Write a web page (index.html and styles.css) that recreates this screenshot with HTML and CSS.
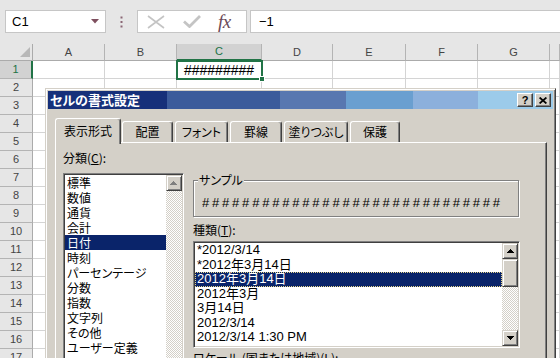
FILE: index.html
```html
<!DOCTYPE html>
<html lang="ja">
<head>
<meta charset="utf-8">
<title>セルの書式設定</title>
<link rel="stylesheet" href="styles.css">
</head>
<body>
<div class="app">
  <div class="fbar">
    <div class="namebox">
      <span class="nb-text">C1</span>
      <svg class="nb-dd" width="8" height="5" viewBox="0 0 8 5"><path d="M0 0H8L4 4.5Z" fill="#7e4f5e"/></svg>
    </div>
    <div class="grip">
      <svg width="3" height="12" viewBox="0 0 3 12"><rect x="0.5" y="0.5" width="2" height="2" fill="#8a6674"/><rect x="0.5" y="5" width="2" height="2" fill="#8a6674"/><rect x="0.5" y="9.5" width="2" height="2" fill="#8a6674"/></svg>
    </div>
    <div class="fxbox">
      <svg class="ico-x" width="18" height="14" viewBox="0 0 18 14"><path d="M1 1L17 13M17 1L1 13" stroke="#c4c4c4" stroke-width="1.6" fill="none"/></svg>
      <svg class="ico-check" width="18" height="13" viewBox="0 0 18 13"><path d="M1 6.5L6.5 11.5L17 1" stroke="#c4c4c4" stroke-width="2.8" fill="none"/></svg>
      <span class="fx">fx</span>
    </div>
    <div class="finput">−1</div>
  </div>

  <div class="sheet">
    <div class="col rowhdr">
      <div class="hdr corner"><svg width="12" height="12" viewBox="0 0 12 12"><path d="M11 1V11H1Z" fill="#b8b8b8"/></svg></div>
      <div class="rn rn-sel">1</div>
      <div class="rn">2</div>
      <div class="rn">3</div>
      <div class="rn">4</div>
      <div class="rn">5</div>
      <div class="rn">6</div>
      <div class="rn">7</div>
      <div class="rn">8</div>
      <div class="rn">9</div>
      <div class="rn">10</div>
      <div class="rn">11</div>
      <div class="rn">12</div>
      <div class="rn">13</div>
      <div class="rn">14</div>
      <div class="rn">15</div>
      <div class="rn">16</div>
      <div class="rn">17</div>
    </div>
    <div class="col w72"><div class="hdr">A</div><div class="body"></div></div>
    <div class="col w72"><div class="hdr">B</div><div class="body"></div></div>
    <div class="col w85"><div class="hdr hdr-sel">C</div><div class="body"><div class="cell-val">#########</div></div></div>
    <div class="col w71"><div class="hdr">D</div><div class="body"></div></div>
    <div class="col w73"><div class="hdr">E</div><div class="body"></div></div>
    <div class="col w72"><div class="hdr">F</div><div class="body"></div></div>
    <div class="col w72"><div class="hdr">G</div><div class="body"></div></div>
    <div class="col wrest"><div class="hdr"></div><div class="body"></div></div>
    <div class="sel-box"><div class="fill-handle"></div></div>
  </div>

  <div class="dialog">
    <div class="titlebar">
      <span class="title">セルの書式設定</span>
      <div class="tbtns">
        <div class="tbtn"><span class="q">?</span></div>
        <div class="tbtn"><svg width="8" height="7" viewBox="0 0 8 7"><path d="M0.6 0.5L7.4 6.5M7.4 0.5L0.6 6.5" stroke="#000" stroke-width="1.7" fill="none"/></svg></div>
      </div>
    </div>

    <div class="tabs">
      <div class="tab active">表示形式</div>
      <div class="tab t-haichi">配置</div>
      <div class="tab t-font">フォント</div>
      <div class="tab t-keisen">罫線</div>
      <div class="tab t-nuri">塗りつぶし</div>
      <div class="tab t-hogo">保護</div>
    </div>

    <div class="panel">
      <div class="lcol">
        <div class="lbl">分類(<u>C</u>):</div>
        <div class="listbox cat">
          <div class="items">
            <div class="it">標準</div>
            <div class="it">数値</div>
            <div class="it">通貨</div>
            <div class="it">会計</div>
            <div class="it it-sel">日付</div>
            <div class="it">時刻</div>
            <div class="it">パーセンテージ</div>
            <div class="it">分数</div>
            <div class="it">指数</div>
            <div class="it">文字列</div>
            <div class="it">その他</div>
            <div class="it">ユーザー定義</div>
          </div>
          <div class="vscroll">
            <div class="sbtn"><svg width="8" height="5" viewBox="0 0 8 5"><path d="M4 1h1v1h1v1h1v1H2V3h1V2h1z" fill="#fff"/><path d="M3 0h1v1h1v1h1v1h1v1H0V3h1V2h1V1h1z" fill="#808080"/></svg></div>
            <div class="track"></div>
          </div>
        </div>
      </div>

      <div class="rcol">
        <div class="group">
          <span class="legend">サンプル</span>
          <div class="sample">##############################</div>
        </div>
        <div class="lbl lbl-types">種類(<u>T</u>):</div>
        <div class="listbox types">
          <div class="items">
            <div class="ti">*2012/3/14</div>
            <div class="ti">*2012年3月14日</div>
            <div class="ti ti-sel">2012年3月14日</div>
            <div class="ti">2012年3月</div>
            <div class="ti">3月14日</div>
            <div class="ti">2012/3/14</div>
            <div class="ti">2012/3/14 1:30 PM</div>
          </div>
          <div class="vscroll">
            <div class="sbtn"><svg width="7" height="4" viewBox="0 0 7 4"><path d="M3 0h1v1h1v1h1v1h1v1H0V3h1V2h1V1h1z" fill="#000"/></svg></div>
            <div class="sbtn thumb"></div>
            <div class="track"></div>
            <div class="sbtn"><svg width="7" height="4" viewBox="0 0 7 4"><path d="M0 0h7v1H6v1H5v1H4v1H3V3H2V2H1V1H0z" fill="#000"/></svg></div>
          </div>
        </div>
        <div class="lbl lbl-locale">ロケール (国または地域)(<u>L</u>):</div>
      </div>
    </div>
  </div>
</div>
</body>
</html>
```

FILE: styles.css
```css
* { box-sizing: border-box; margin: 0; padding: 0; }
html, body { width: 560px; height: 358px; overflow: hidden; }
body { margin: 0; background: #fff; font-family: "Liberation Sans", Arial, sans-serif; }

.app { position: relative; width: 560px; height: 358px; overflow: hidden; background: #fff; }

/* ---------- formula bar ---------- */
.fbar { height: 44px; background: #e6e6e6; display: flex; align-items: flex-start; padding-top: 10px; }
.namebox { margin-left: 5px; width: 101px; height: 23px; background: #fff; border: 1px solid #c6c6c6; display: flex; align-items: center; justify-content: space-between; padding: 0 6px 0 6px; }
.nb-text { font-size: 13px; color: #000; }
.grip { width: 31px; height: 23px; display: flex; align-items: center; justify-content: center; }
.fxbox { width: 110px; height: 23px; background: #fff; border: 1px solid #c6c6c6; display: flex; align-items: center; padding-left: 9px; }
.ico-check { margin-left: 18px; }
.fx { margin-left: 17px; font-family: "Liberation Serif", serif; font-style: italic; font-size: 19px; line-height: 21px; color: #6b4a58; letter-spacing: -0.5px; }
.finput { margin-left: 3px; flex: 1; height: 23px; background: #fff; border: 1px solid #c6c6c6; border-right: none; font-size: 13px; line-height: 21px; padding-left: 8px; color: #000; }

/* ---------- sheet ---------- */
.sheet { position: relative; display: flex; height: 314px; }
.col { display: flex; flex-direction: column; flex: none; }
.rowhdr { width: 33px; }
.w72 { width: 72px; }
.w85 { width: 85px; }
.w71 { width: 71px; }
.w73 { width: 73px; }
.wrest { flex: 1; }

.hdr { height: 17px; flex: none; background: #e6e6e6; border-right: 1px solid #b4b4b4; border-bottom: 1px solid #ababab; font-size: 11px; color: #444; text-align: center; line-height: 16px; }
.hdr-sel { background: #d2d2d2; color: #217346; border-bottom: 2px solid #217346; line-height: 15px; }
.corner { display: flex; align-items: flex-end; justify-content: flex-end; padding: 0 1px 2px 0; border-right: 1px solid #ababab; }

.rn { height: 18px; flex: none; background: #e6e6e6; border-right: 1px solid #ababab; border-bottom: 1px solid #b4b4b4; font-size: 11px; color: #444; text-align: center; line-height: 17px; }
.rn-sel { background: #d2d2d2; color: #217346; border-right: 2px solid #217346; }

.body { flex: 1; background: repeating-linear-gradient(to bottom, #fff 0 17px, #d4d4d4 17px 18px); border-right: 1px solid #d4d4d4; }
.cell-val { height: 17px; line-height: 18px; text-align: center; font-size: 14px; color: #000; }

.sel-box { position: absolute; left: 176px; top: 16px; width: 87px; height: 20px; border: 2px solid #217346; }
.fill-handle { position: absolute; right: -4px; bottom: -4px; width: 6px; height: 6px; background: #217346; border: 1px solid #fff; }

/* ---------- dialog ---------- */
.dialog { position: absolute; left: 45px; top: 88px; width: 511px; height: 300px; background: #d4d0c8; border: 1px solid; border-color: #d4d0c8 #404040 #404040 #d4d0c8; box-shadow: inset 1px 1px 0 #fff, inset -1px -1px 0 #808080; padding: 2px; font-family: "Noto Sans CJK JP", sans-serif; font-feature-settings: "palt"; font-size: 12px; color: #000; }

.titlebar { height: 18px; display: flex; align-items: center; justify-content: space-between; padding: 0 2px; background: linear-gradient(to right, #16307a 0 119px, #3b5b9b 119px 232px, #5877b0 232px 298px, #6a9fd0 298px 365px, #8cb0dc 365px 430px, #9ccbea 430px); }
.title { color: #fff; font-weight: bold; font-size: 13px; line-height: 16px; }
.tbtns { display: flex; gap: 2px; }
.tbtn { width: 16px; height: 14px; background: #d4d0c8; border: 1px solid; border-color: #fff #404040 #404040 #fff; box-shadow: inset -1px -1px 0 #808080; display: flex; align-items: center; justify-content: center; }
.q { font-family: "Liberation Sans", Arial, sans-serif; font-weight: bold; font-size: 11px; line-height: 11px; color: #000; }

.tabs { margin-top: 9px; margin-left: 7px; height: 24px; display: flex; align-items: flex-end; }
.tab { height: 21px; display: flex; align-items: center; justify-content: center; border: 1px solid; border-color: #fff #404040 transparent #fff; border-bottom: none; border-radius: 3px 3px 0 0; box-shadow: inset -1px 0 0 #808080; margin-left: 2px; line-height: 14px; background: #d4d0c8; }
.tab.active { width: 66px; height: 26px; margin-left: 0; margin-bottom: -2px; position: relative; z-index: 1; padding-bottom: 1px; }
.t-haichi { width: 51px; margin-left: 1px; }
.t-font { width: 53px; }
.t-keisen { width: 52px; }
.t-nuri { width: 64px; }
.t-hogo { width: 50px; }

.panel { margin-left: 7px; width: 492px; height: 240px; border-top: 1px solid #fff; border-left: 1px solid #fff; border-right: 1px solid #404040; box-shadow: inset -1px 0 0 #808080; padding: 8px 0 0 7px; display: flex; gap: 9px; }

.lbl { height: 14px; line-height: 14px; white-space: nowrap; }
.lbl u { text-decoration-thickness: 1px; text-underline-offset: 1px; }

.lcol { width: 121px; flex: none; }
.listbox { display: flex; background: #fff; border: 1px solid; border-color: #808080 #fff #fff #808080; box-shadow: inset 1px 1px 0 #404040, inset -1px -1px 0 #d4d0c8; padding: 1px; }
.listbox.cat { margin-top: 8px; height: 200px; }
.items { flex: 1; min-width: 0; }
.it { height: 15px; line-height: 15px; padding-left: 2px; white-space: nowrap; }
.it-sel { background: #0a246a; color: #fff; }

.vscroll { width: 16px; flex: none; display: flex; flex-direction: column; }
.sbtn { width: 16px; height: 16px; flex: none; background: #d4d0c8; border: 1px solid; border-color: #d4d0c8 #404040 #404040 #d4d0c8; box-shadow: inset 1px 1px 0 #fff, inset -1px -1px 0 #808080; display: flex; align-items: center; justify-content: center; }
.sbtn.thumb { height: 28px; }
.track { flex: 1; background: repeating-conic-gradient(#d4d0c8 0 25%, #fff 0 50%) 0 0 / 2px 2px; }

.rcol { width: 327px; flex: none; }
.group { position: relative; margin-top: 29px; width: 326px; height: 37px; border: 1px solid #808080; box-shadow: inset 1px 1px 0 #fff, 1px 1px 0 #fff; padding: 15px 0 0 8px; }
.legend { position: absolute; top: -8px; left: 4px; padding: 0 1px; background: #d4d0c8; line-height: 14px; }
.sample { font-family: "Liberation Sans", Arial, sans-serif; font-size: 13px; line-height: 14px; letter-spacing: 2.8px; white-space: nowrap; overflow: hidden; }

.lbl-types { margin-top: 6px; }
.listbox.types { margin-top: 4px; height: 107px; }
.ti { height: calc(102px / 7); line-height: calc(102px / 7); padding-left: 2px; font-family: "Liberation Sans", "Noto Sans CJK JP", sans-serif; font-size: 13px; white-space: nowrap; }
.ti-sel { background: #0a246a; color: #fff; outline: 1px dotted #e6d68a; outline-offset: -1px; }

.lbl-locale { margin-top: 3px; }
```
